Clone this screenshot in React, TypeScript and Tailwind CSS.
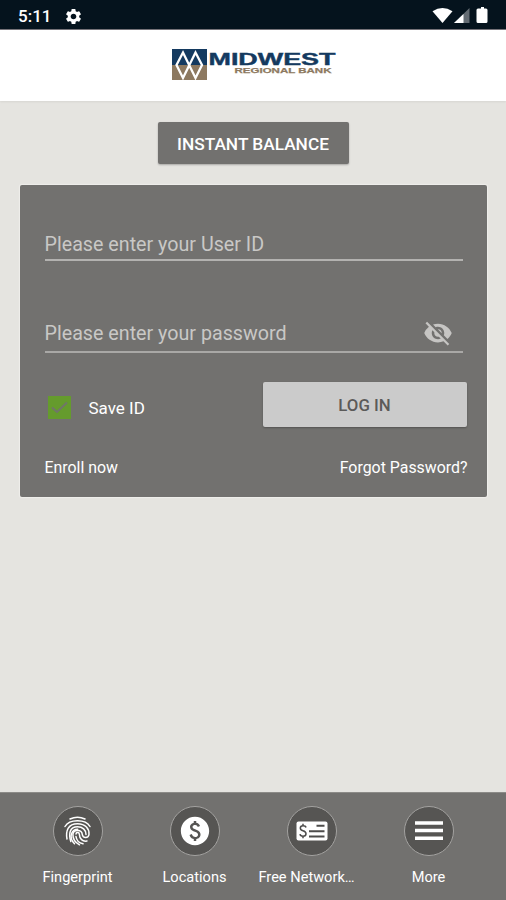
import React from "react";
import { MdPaid, MdSettings, MdVisibilityOff } from "react-icons/md";

const StatusBar = () => (
  <div className="flex h-[30px] items-center justify-between border-b border-[#77747a] bg-[#05131d] pr-[16px] pl-[18px] text-white">
    <div className="flex items-center pt-[3px]">
      <span className="w-[33px] text-[17px] leading-none font-medium whitespace-nowrap">5:11</span>
      <MdSettings className="ml-[13px] size-[19px]" />
    </div>
    <svg className="mt-[2px] h-[18px] w-[58px]" viewBox="0 0 58 18" fill="currentColor">
      <path d="M0.5 4.2Q10.500-2 20.500 4.200L10.500 16Z" />
      <path d="M22 16L37.500 1V16Z" opacity=".38" />
      <path d="M22 16L31.500 7V16Z" />
      <path d="M49 0h3v1.500h2q1.500 0 1.500 1.500v11.500q0 1.500-1.500 1.500h-8q-1.500 0-1.500-1.500V3q0-1.500 1.500-1.500h3z" />
    </svg>
  </div>
);

const Logo = () => (
  <svg className="h-[34px] w-[166px]" viewBox="0 0 166 34">
    <path d="M1 1H36V17H1Z" fill="#143a60" />
    <path d="M1 17H36V32H1Z" fill="#8d7960" />
    <path
      d="M5.500 17L12 4.500L24.500 30L31 17L24.500 4.500L12 30Z"
      fill="none"
      stroke="#fff"
      strokeWidth="2.300"
    />
    <text x="37.500" y="16.500" fill="#143a60" stroke="#143a60" strokeWidth="0.400" fontSize="16.500" fontWeight="700" textLength="127" lengthAdjust="spacingAndGlyphs" fontFamily="Liberation Sans, sans-serif">
      MIDWEST
    </text>
    <text x="63.500" y="24.700" fill="#8d7960" stroke="#8d7960" strokeWidth="0.250" fontSize="7.400" fontWeight="700" textLength="97" lengthAdjust="spacingAndGlyphs" fontFamily="Liberation Sans, sans-serif">
      REGIONAL BANK
    </text>
  </svg>
);

const FingerprintIcon = () => (
  <svg
    className="h-[30px] w-[27px]"
    viewBox="0 0 27 30"
    fill="none"
    stroke="#fff"
    strokeWidth="1.500"
    strokeLinecap="round"
  >
    <path d="M6 3Q13.500-0.600 21 3" />
    <path d="M1 10.500C3 7 7.500 4.700 13.500 4.700S24 7 26 10.500" />
    <path d="M3 23C1.500 15 4 7.700 13.500 7.700C21.500 7.700 25.500 13 25 18.500C24.500 22.500 18.800 22.500 18.300 18.500C18 13 9.200 13 8.900 18.500C8.800 23 11 26.500 15.500 28.800" />
    <path d="M6.800 25.500C4.500 18 5.500 10.700 13.500 10.700C18.500 10.700 22 14 22 18.500" />
    <path d="M10.500 27.800C3.500 20.500 8.500 13.300 13.700 13.300" />
    <path d="M12 18C12 16 15.200 16 15.300 18C15.500 23 18.500 25.800 23 25" />
    <path d="M12 20.500C12.500 24.500 15 27 19 27.800" />
  </svg>
);

const CheckCardIcon = () => (
  <svg className="h-[20px] w-[32px]" viewBox="0 0 32 20">
    <rect x="0.500" y="0.500" width="31" height="19" rx="2" fill="#fff" />
    <path
      d="M10 6.500Q9.600 4.700 7 4.700Q4.300 4.700 4.300 7Q4.300 9 7 9.700Q10 10.500 10 12.800Q10 15.300 7 15.300Q4.300 15.300 4 13.200M7 2.700V4.700M7 15.300V17.300"
      fill="none"
      stroke="#4d4c4b"
      strokeWidth="1.500"
    />
    <path d="M20.500 4.800H28.500M13 10.200H28.500M13 15.500H28.500" stroke="#4d4c4b" strokeWidth="1.900" />
  </svg>
);

const MenuIcon = () => (
  <svg className="h-[20px] w-[28px]" viewBox="0 0 28 20">
    <path d="M0 2H28M0 9.500H28M0 17.300H28" stroke="#fff" strokeWidth="3.500" />
  </svg>
);

const navItems = [
  { label: "Fingerprint", icon: <FingerprintIcon /> },
  { label: "Locations", icon: <MdPaid className="size-[34px]" /> },
  { label: "Free Network…", icon: <CheckCardIcon />, labelClass: "mr-[10px]" },
  { label: "More", icon: <MenuIcon /> },
];

const BottomNav = () => (
  <nav className="grid h-[108px] grid-cols-4 border-t border-[#8c8b88] bg-[#72716f] px-[19px] pt-[13px]">
    {navItems.map((item) => (
      <div key={item.label} className="flex flex-col items-center text-white">
        <div className="flex size-[50px] items-center justify-center rounded-full border-[1.5px] border-[#a3a2a0] bg-[#565553]">
          {item.icon}
        </div>
        <span className={`mt-[11px] text-[14.6px] leading-[20px] whitespace-nowrap ${item.labelClass ?? ""}`}>
          {item.label}
        </span>
      </div>
    ))}
  </nav>
);

const LoginCard = () => (
  <div className="mx-auto mt-[21px] h-[312px] w-[467px] rounded-[2px] bg-[#72716f] pt-[46px] pr-[20px] pl-[25px] shadow-[0_0_1px_1px_#efeeeb]">
    <div className="h-[30px] w-[418px] border-b-2 border-[#b3b2b0] text-[19.7px] leading-[27px] text-[#c9c8c6]">
      Please enter your User ID
    </div>
    <div className="mt-[55px] flex h-[37px] w-[418px] justify-between border-b-2 border-[#a9a8a6] text-[19.7px] leading-[35px] text-[#c9c8c6]">
      <span>Please enter your password</span>
      <MdVisibilityOff className="mt-[2px] mr-[10px] size-[30px] text-[#c6c5c3]" />
    </div>
    <div className="mt-[29px] flex items-center">
      <div className="mt-[5px] ml-[3px] flex size-[23px] items-center justify-center bg-[#659b2d]">
        <svg className="size-[19px]" viewBox="0 0 19 19" fill="none" stroke="#71756a" strokeWidth="2">
          <path d="M2 9.500L7 14L17 4.500" />
        </svg>
      </div>
      <span className="mt-[8px] ml-[18px] text-[17px] text-white">Save ID</span>
      <div className="ml-auto flex h-[45px] w-[204px] items-center justify-center rounded-[2px] bg-[#cbcbcb] pt-[3px] text-[16.8px] font-medium text-[#5b5a59] shadow-[0_1px_2px_#0004]">
        LOG IN
      </div>
    </div>
    <div className="mt-[30px] -mr-px flex justify-between text-[15.9px] leading-[22px] text-white">
      <span>Enroll now</span>
      <span>Forgot Password?</span>
    </div>
  </div>
);

export default function App() {
  return (
    <div className="flex h-[900px] w-[506px] flex-col overflow-hidden bg-[#e5e4e0] font-[Roboto,sans-serif]">
      <StatusBar />
      <header className="flex h-[71px] justify-center bg-white pt-[18px] pl-[2px] shadow-[0_1px_2px_#0001]">
        <Logo />
      </header>
      <main className="flex-1">
        <div className="mx-auto mt-[21px] flex h-[42px] w-[191px] items-center justify-center rounded-[2px] bg-[#72716f] pt-[3px] text-[17.3px] font-medium text-white shadow-[0_1px_2px_#0004]">
          INSTANT BALANCE
        </div>
        <LoginCard />
      </main>
      <BottomNav />
    </div>
  );
}
